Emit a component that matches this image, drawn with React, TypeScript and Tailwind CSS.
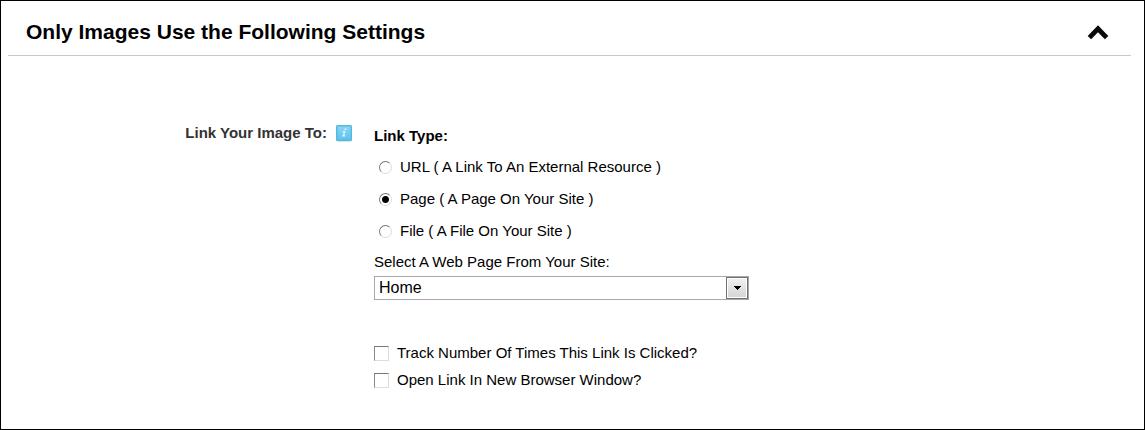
import { useState } from "react";

type LinkType = "url" | "page" | "file";

const linkTypes: { value: LinkType; label: string }[] = [
  { value: "url", label: "URL ( A Link To An External Resource )" },
  { value: "page", label: "Page ( A Page On Your Site )" },
  { value: "file", label: "File ( A File On Your Site )" },
];

const trackingOptions = [
  { id: "track-clicks", label: "Track Number Of Times This Link Is Clicked?" },
  { id: "new-window", label: "Open Link In New Browser Window?" },
];

function ChevronUp() {
  return (
    <svg width="22" height="16" viewBox="0 0 22 16" fill="none" aria-hidden="true">
      <path d="M2.4 13.6 11 4.8l8.6 8.8" stroke="#0a0a0a" strokeWidth="4.8" />
    </svg>
  );
}

function InfoIcon() {
  return (
    <svg width="18" height="18" viewBox="0 0 18 18" aria-hidden="true">
      <defs>
        <linearGradient id="info-fill" x1="0" y1="0" x2="0" y2="1">
          <stop offset="0" stopColor="#8ad6f4" />
          <stop offset="1" stopColor="#5cc4f0" />
        </linearGradient>
      </defs>
      <rect x="1" y="2" width="16" height="16" rx="2" fill="#e2e2e2" />
      <rect x="1" y="1" width="16" height="16" rx="1.5" fill="#58b8e0" />
      <rect x="2.5" y="2.5" width="13" height="13" fill="url(#info-fill)" />
      <path d="M9.7 4.5h1.8l-.4 1.6H9.3zM7.8 7h2.8L9.4 11.2h.9l-.3 1.2H7l.3-1.2h.5l.8-3H7.5z" fill="#dcf4fd" />
    </svg>
  );
}

export default function App() {
  const [open, setOpen] = useState(true);
  const [linkType, setLinkType] = useState<LinkType>("page");

  return (
    <main className="min-h-screen border border-black bg-white font-['Liberation_Sans',Arial,sans-serif] text-[15px] leading-5 text-black">
      <header className="ml-[7px] mr-[13px] flex h-[55px] items-center justify-between border-b border-[#c8c8c8] pl-[18px] pr-[22px] pt-2">
        <h1 className="text-[21px] leading-7 font-bold">Only Images Use the Following Settings</h1>
        <button type="button" aria-label="Toggle image settings" aria-expanded={open} onClick={() => setOpen(!open)}>
          <ChevronUp />
        </button>
      </header>

      {open && (
        <form className="flex gap-[21px] pt-[67px]">
          <div className="flex h-5 w-[352px] shrink-0 items-center justify-end gap-2 font-bold text-[#333]">
            <span id="link-heading">Link Your Image To:</span>
            <button type="button" aria-label="About image links">
              <InfoIcon />
            </button>
          </div>

          <div className="w-[375px] pt-[3px]">
            <fieldset aria-describedby="link-heading">
              <legend className="font-bold">Link Type:</legend>
              <div className="mt-[11px] flex flex-col gap-3">
                {linkTypes.map((type) => (
                  <label key={type.value} className="flex items-center gap-2 pl-[5px]">
                    <input
                      type="radio"
                      name="link-type"
                      value={type.value}
                      checked={linkType === type.value}
                      onChange={() => setLinkType(type.value)}
                      className="size-[13px] appearance-none rounded-full border border-t-[#777] border-r-[#ddd] border-b-[#ddd] border-l-[#777] bg-white checked:bg-[radial-gradient(circle,#000_3px,transparent_4px)]"
                    />
                    {type.label}
                  </label>
                ))}
              </div>
            </fieldset>

            <label htmlFor="web-page" className="mt-[11px] block">
              Select A Web Page From Your Site:
            </label>
            <div className="mt-1 grid">
              <select
                id="web-page"
                className="col-start-1 row-start-1 h-6 w-full appearance-none border border-[#a9a9ad] bg-white pl-1 text-base leading-5"
              >
                <option>Home</option>
              </select>
              <span className="pointer-events-none col-start-1 row-start-1 mr-px flex h-[22px] w-[22px] items-center justify-center self-center justify-self-end border border-[#707070] bg-linear-to-b from-[#f2f2f2] to-[#d4d4d4] ring-1 ring-white ring-inset">
                <svg width="7" height="4" viewBox="0 0 7 4" shapeRendering="crispEdges" aria-hidden="true">
                  <path d="M0 0h7v1H6v1H5v1H4v1H3V3H2V2H1V1H0z" />
                </svg>
              </span>
            </div>

            <div className="mt-[43px] flex flex-col gap-[7px]">
              {trackingOptions.map((option) => (
                <label key={option.id} className="flex items-center gap-2">
                  <input
                    id={option.id}
                    type="checkbox"
                    className="size-[15px] appearance-none border border-t-[#777] border-r-[#ddd] border-b-[#ddd] border-l-[#888] bg-white checked:bg-[#333]"
                  />
                  {option.label}
                </label>
              ))}
            </div>
          </div>
        </form>
      )}
    </main>
  );
}
